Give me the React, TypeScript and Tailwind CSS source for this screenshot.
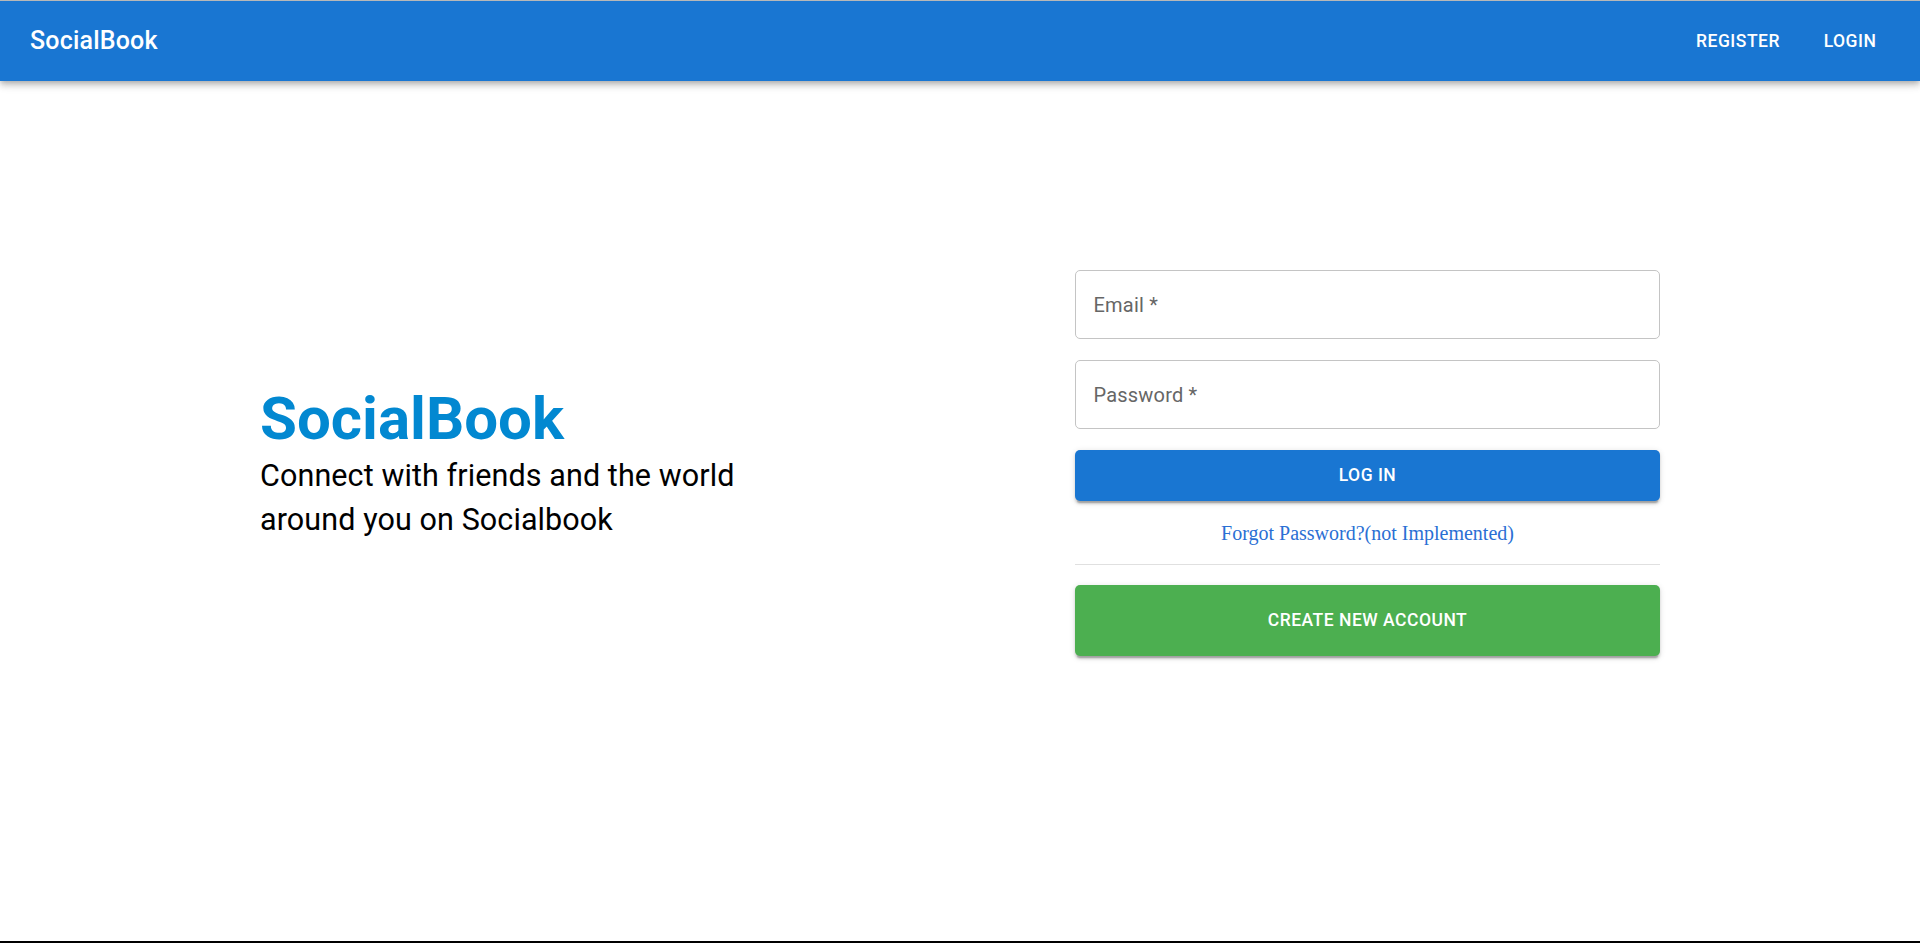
import React from 'react'

const BTN_SHADOW =
  'shadow-[0_3.75px_1.25px_-2.5px_rgba(0,0,0,0.2),0_2.5px_2.5px_0_rgba(0,0,0,0.14),0_1.25px_6px_0_rgba(0,0,0,0.12)]'

function Field({ label }: { label: string }) {
  return (
    <div className="h-[69px] rounded-[5px] border border-[#c4c4c4] flex items-center px-[17.5px]">
      <span className="text-[20px] text-[#666666] tracking-[0.01em]">{label} *</span>
    </div>
  )
}

export default function App() {
  return (
    <div
      className="h-[943px] flex flex-col bg-white border-t border-[#b8b8b8] border-b-2 border-b-black overflow-hidden"
      style={{ fontFamily: 'Roboto, "Liberation Sans", Arial, sans-serif' }}
    >
      {/* app bar */}
      <header className="relative z-10 h-[80px] shrink-0 bg-[#1976d2] text-white flex items-center pl-[30px] pr-[30px] shadow-[0_2.5px_5px_-1.25px_rgba(0,0,0,0.2),0_5px_6px_0_rgba(0,0,0,0.14),0_1.25px_12.5px_0_rgba(0,0,0,0.12)]">
        <h1 className="text-[25px] font-medium tracking-[0.0075em] flex-1">SocialBook</h1>
        <nav className="flex items-center gap-[20px]">
          <button className="min-w-[80px] px-[10px] py-[7.5px] text-[17.5px] font-medium uppercase tracking-[0.5px]">
            Register
          </button>
          <button className="min-w-[80px] px-[10px] py-[7.5px] text-[17.5px] font-medium uppercase tracking-[0.5px]">
            Login
          </button>
        </nav>
      </header>

      <main className="flex-1 pt-[189px] pl-[260px]">
        <div className="flex items-center">
          <div className="w-[815px]">
            <h2 className="text-[60px] leading-[70px] font-bold text-[#0288d1]">SocialBook</h2>
            <p className="max-w-[560px] text-[30.5px] leading-[44px] tracking-[0.1px] text-black">
              Connect with friends and the world around you on Socialbook
            </p>
          </div>

          <div className="w-[585px] flex flex-col">
            <Field label="Email" />
            <div className="mt-[21px]">
              <Field label="Password" />
            </div>
            <button
              className={`mt-[21px] h-[51px] rounded-[5px] bg-[#1976d2] text-white text-[17.5px] font-medium uppercase tracking-[0.5px] ${BTN_SHADOW}`}
            >
              Log In
            </button>
            <div className="h-[63px] flex items-center justify-center">
              <a
                className="text-[20px] text-[#2a6fd4]"
                style={{ fontFamily: '"Liberation Serif", "Times New Roman", serif' }}
              >
                Forgot Password?(not Implemented)
              </a>
            </div>
            <div className="h-px bg-[#e0e0e0]" />
            <button
              className={`mt-[20px] h-[71px] rounded-[5px] bg-[#4caf50] text-white text-[17.5px] font-medium uppercase tracking-[0.5px] ${BTN_SHADOW}`}
            >
              Create New Account
            </button>
          </div>
        </div>
      </main>
    </div>
  )
}
